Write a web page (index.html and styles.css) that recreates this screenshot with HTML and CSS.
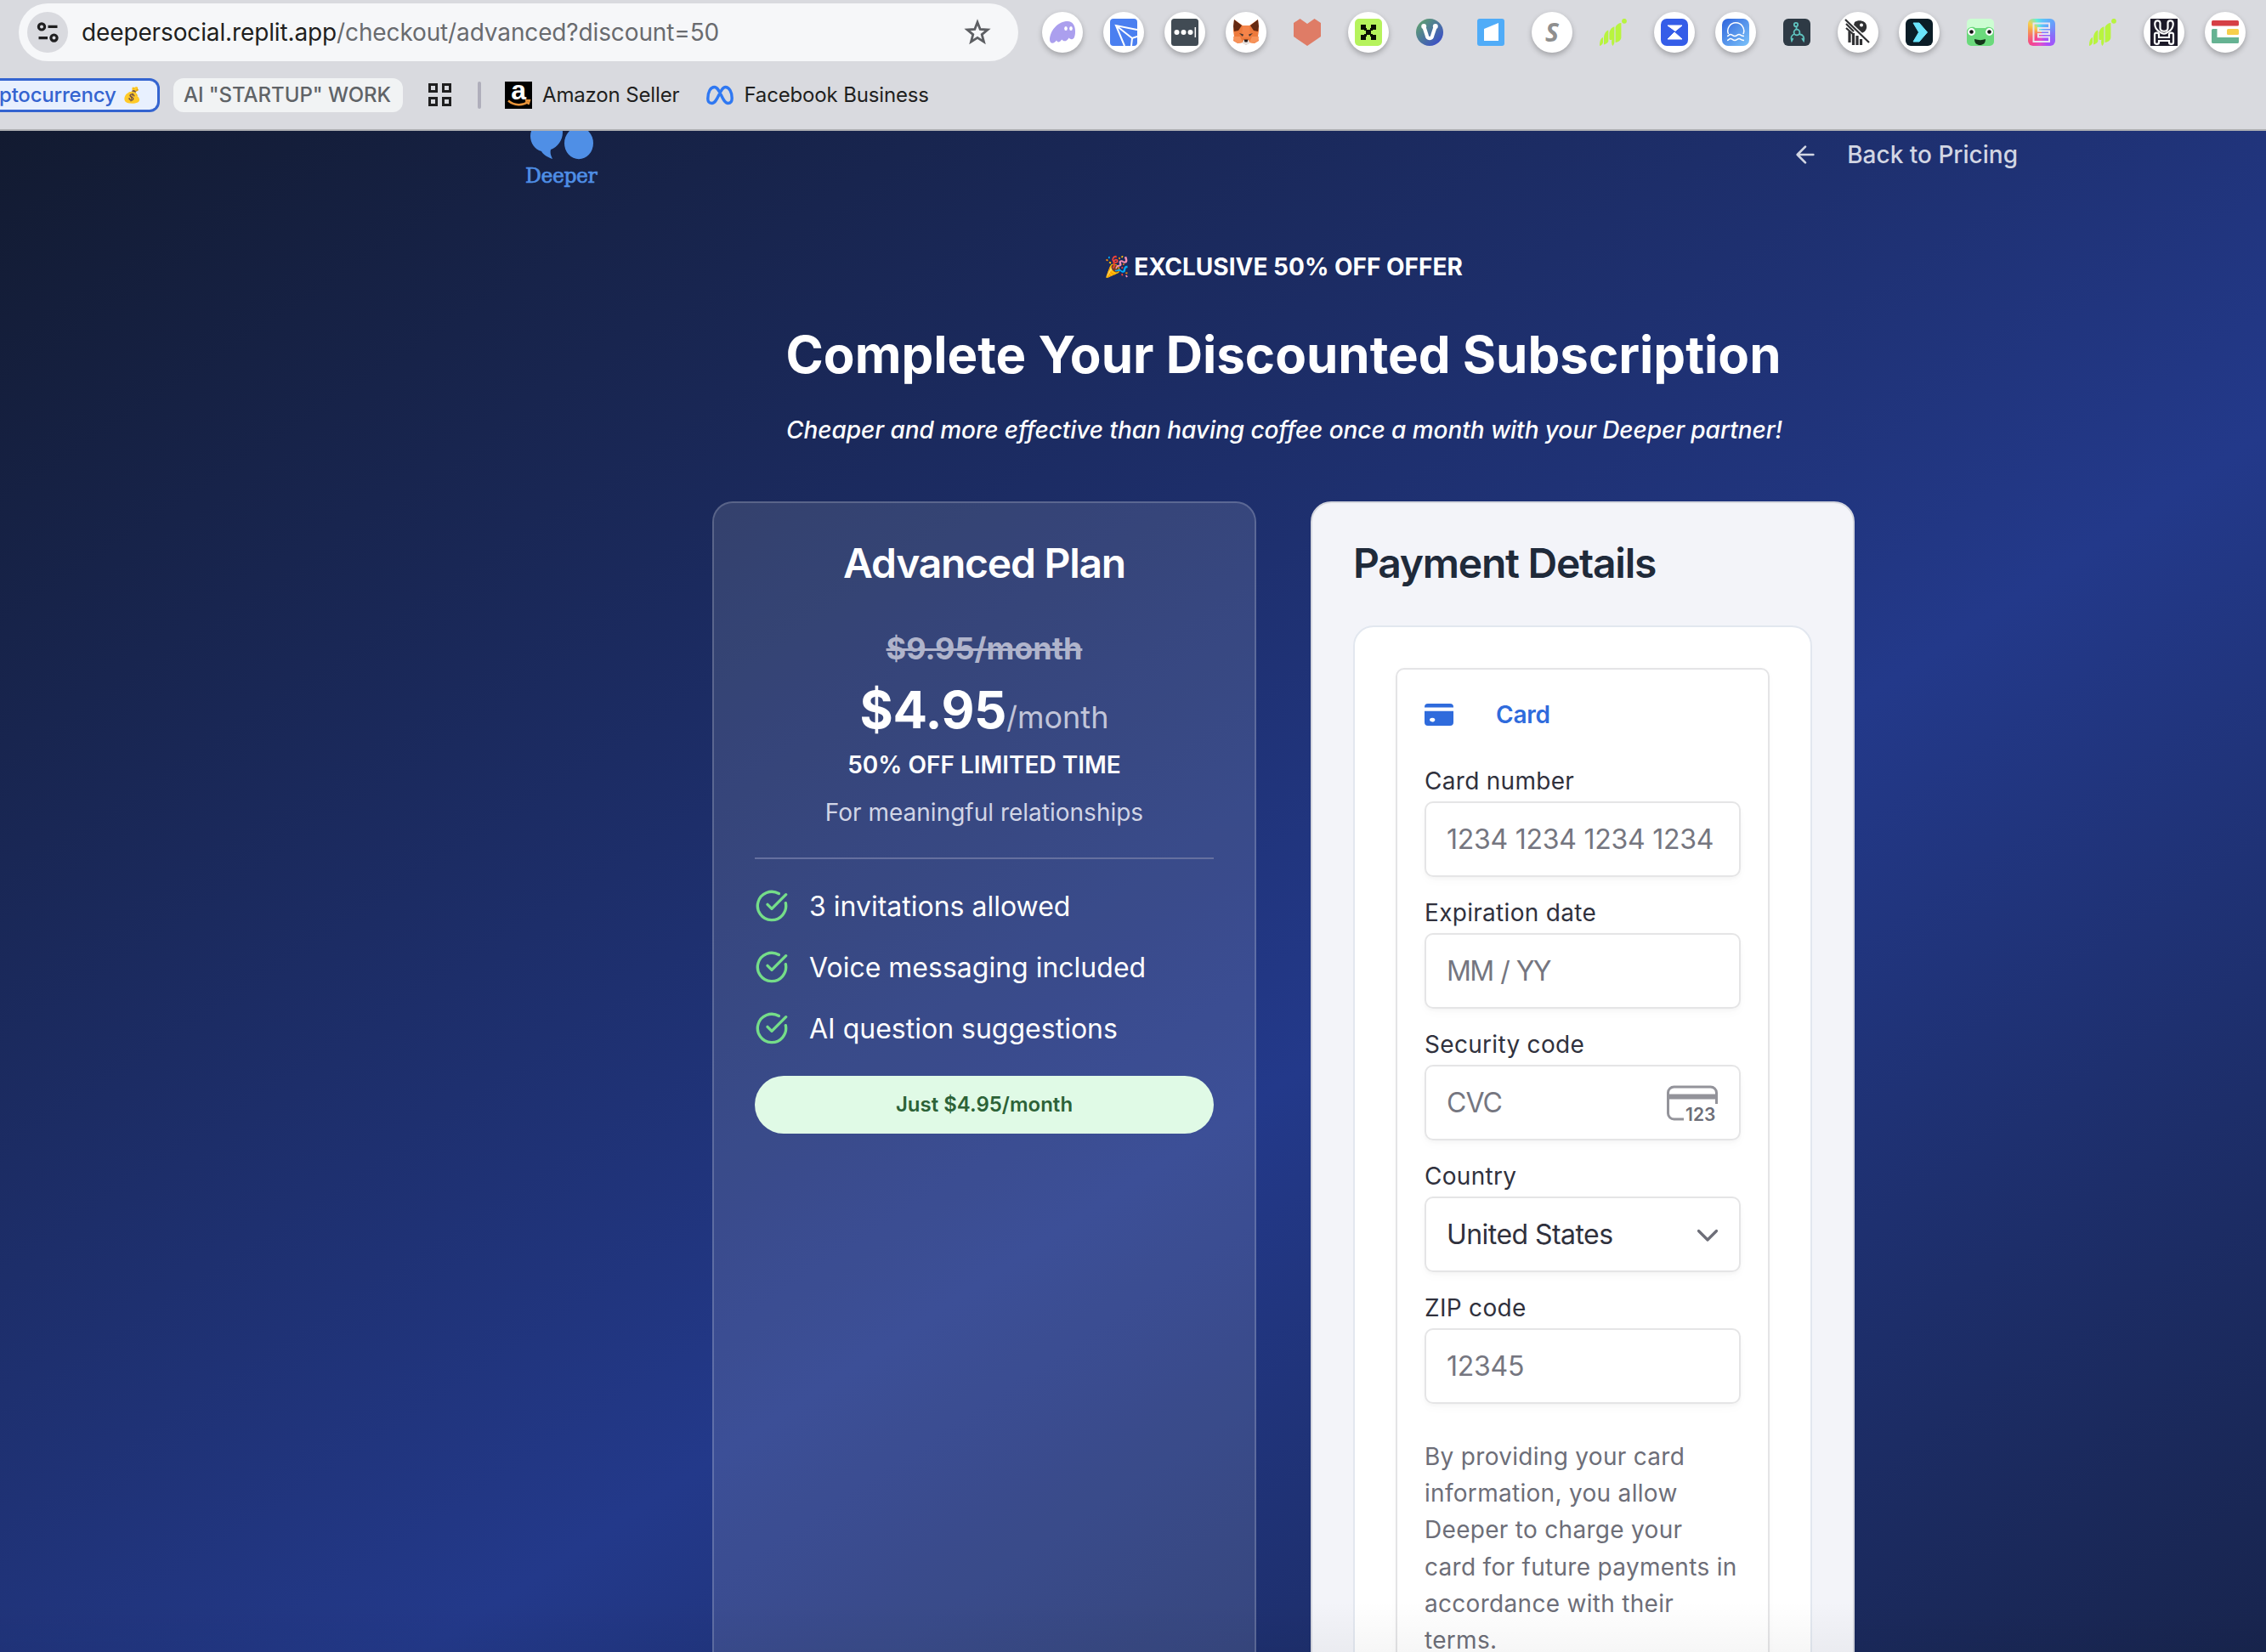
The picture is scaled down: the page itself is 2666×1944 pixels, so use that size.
FILE: index.html
```html
<!DOCTYPE html>
<html lang="en">
<head>
<meta charset="utf-8">
<title>Deeper – Checkout</title>
<link rel="stylesheet" href="styles.css">
</head>
<body>
<header class="browser">
  <div class="toolbar">
    <div class="omnibox">
      <span class="site-info">
        <svg width="32" height="32" viewBox="0 0 32 32" fill="none" stroke="#1f1f20" stroke-width="3.2"><circle cx="9" cy="9.4" r="3.6"/><path d="M16.500 9.400H27.500M5.500 22.600H16"/><circle cx="23.500" cy="22.600" r="3.600"/></svg>
      </span>
      <span class="url"><b>deepersocial.replit.app</b>/checkout/advanced?discount=50</span>
      <svg class="star" width="32" height="32" viewBox="0 0 32 32" fill="none" stroke="#5d5f63" stroke-width="2.800"><path d="M16 4.200l3.200 8.200 8.800.6-6.800 5.600 2.300 8.600L16 22.400l-7.500 4.800 2.300-8.600L4 13l8.800-.6z"/></svg>
    </div>
    <div class="extensions">
      <span class="ext ext-round"><svg viewBox="0 0 32 32"><path d="M1 24C2 13 11 3 22 3c6 0 9 5 9 12 0 7-2 10-5 9-1.200-.3-1.800-1-2.400-1.600-1.800 3.500-5.600 5.600-8.400 2.200C12.600 28.500 10 28 9 25.500 6.500 29.500.8 30.500 1 24z" fill="#ab9fee"/><ellipse cx="20" cy="11.500" rx="1.800" ry="2.600" fill="#fff"/><ellipse cx="26" cy="11.500" rx="1.800" ry="2.600" fill="#fff"/></svg></span>
      <span class="ext ext-round"><svg viewBox="0 0 32 32"><rect width="32" height="32" rx="4" fill="#4a7ff0"/><path d="M32 13L7 8l10 24M7 8l19 15 6-2M26 23l-1 9" fill="none" stroke="#fff" stroke-width="2"/></svg></span>
      <span class="ext ext-round"><svg viewBox="0 0 32 32"><rect width="32" height="32" rx="3.500" fill="#414b54"/><circle cx="6.500" cy="16" r="3" fill="#fff"/><circle cx="14.500" cy="16" r="3" fill="#fff"/><circle cx="22.500" cy="16" r="3" fill="#fff"/><path d="M28.300 10v12" stroke="#fff" stroke-width="1.500"/></svg></span>
      <span class="ext ext-round"><svg viewBox="0 0 32 32"><path d="M2 1l10 7h8l10-7 1 13-1 7 1 5-5 3-6-1-4 3-4-3-6 1-5-3 1-5-1-7z" fill="#ee7a3c"/><path d="M2 1l9 7-4 6-5 1-1-6zM30 1l-9 7 4 6 5 1 1-6z" fill="#662a12"/><path d="M1 21h8l3 7-5 1-5-3zM31 21h-8l-3 7 5 1 5-3z" fill="#f7935a"/><path d="M12 8h8l1 14h-10z" fill="#f5844a"/><path d="M8 17l5 1.500-1 2.500zM24 17l-5 1.500 1 2.500z" fill="#40352f"/><path d="M13 25h6l1.500 4-4.500 2-4.500-2z" fill="#e6e2e0"/><path d="M13.500 24.500h5l-1 3h-3z" fill="#2a1a16"/></svg></span>
      <span class="ext"><svg viewBox="0 0 32 32"><path d="M0 5l7.500-5L16 6l8.500-6L32 5v16L16 32 0 21z" fill="#df7c66"/></svg></span>
      <span class="ext ext-round"><svg viewBox="0 0 32 32"><rect width="32" height="32" rx="5" fill="#b6f35c"/><path d="M7 7h6v6H7zM19 7h6v6h-6zM13 13h6v6h-6zM7 19h6v6H7zM19 19h6v6h-6zM11 11h3v3h-3zM18 11h3v3h-3zM11 18h3v3h-3zM18 18h3v3h-3z" fill="#0b0f05"/></svg></span>
      <span class="ext"><svg viewBox="0 0 32 32"><defs><linearGradient id="vg" x1="0" y1="0" x2="1" y2="1"><stop offset=".15" stop-color="#5c9a76"/><stop offset=".85" stop-color="#3d52c4"/></linearGradient></defs><circle cx="16" cy="16" r="16" fill="url(#vg)"/><path d="M9.500 10l3 9c.8 5.500 6.200 5.500 7 0l3-9" fill="none" stroke="#fff" stroke-width="4.200" stroke-linecap="round"/><circle cx="9.200" cy="9" r="3" fill="#fff"/><circle cx="22.800" cy="9" r="3" fill="#fff"/></svg></span>
      <span class="ext"><svg viewBox="0 0 32 32"><rect width="32" height="32" rx="3" fill="#50acf8"/><path d="M8 12l17-7v21H8z" fill="#fff"/></svg></span>
      <span class="ext ext-round"><span class="ext-letter">S</span></span>
      <span class="ext"><svg viewBox="0 0 32 32" fill="#b8f43e"><circle cx="29" cy="2.800" r="2.900"/><path d="M18.600 10c1-3 4-5 6.800-5v17c0 3-3 5.500-6.800 6zM11.400 18c0-4 2.500-8 6-8.500V27c0 2-.8 3.800-2 5-1.200-1.500-1.600-4-1-7.500-1.500 1-3 .5-3-1zM5 23c0-4.500 2-8.500 5.300-9.500V26.500c-.6 2-3 3.500-5.300 4zM0 32c0-5 1-9 4-10v6c-.5 2-2 3.500-4 4z"/></svg></span>
      <span class="ext ext-round"><svg viewBox="0 0 32 32"><rect width="32" height="32" rx="7" fill="#355de8"/><path d="M8 8h17l-8 6.500zM8 24h17l-9-8z" fill="#fff" stroke="#fff" stroke-width="1" stroke-linejoin="round"/></svg></span>
      <span class="ext ext-round"><svg viewBox="0 0 32 32"><defs><linearGradient id="wg" x1="0" y1="0" x2="1" y2="1"><stop stop-color="#2f63dc"/><stop offset="1" stop-color="#7cc4fa"/></linearGradient></defs><rect width="32" height="32" rx="7" fill="url(#wg)"/><path d="M7.500 18a9.500 9.500 0 1 1 17.500 0M6 20.500c2 0 2-2 4-2s2.500 2 5 2 3-2 5-2 2.500 2 6 2M6 25.500c2 0 2-2 4-2s2.500 2 5 2 3-2 5-2 2.500 2 6 2" fill="none" stroke="#fff" stroke-width="1.500"/></svg></span>
      <span class="ext"><svg viewBox="0 0 32 32"><rect width="32" height="32" rx="6" fill="#2e3a45"/><g fill="none" stroke="#5fc3bf" stroke-width="1.800"><circle cx="15" cy="7" r="2.200"/><circle cx="16" cy="16" r="3.400"/><path d="M15.500 9.500v3M13 18c-4 2-4.500 4-3 8l1.500-3M19 18c5 1 6 4 5 8l-2-3"/></g></svg></span>
      <span class="ext ext-round"><svg viewBox="0 0 32 32"><path d="M12 4c5-3.500 13-1.500 14 4 .8 4.500-2 8-6 9-5 0-9-4-9.500-8z" fill="#303133"/><circle cx="20" cy="7.500" r="2" fill="#fff"/><path d="M6 15v13M10.500 17v14M15 20v11M19.500 24v7" stroke="#303133" stroke-width="3.200"/><path d="M1 1l28 27" stroke="#fff" stroke-width="5"/><path d="M1 1l28 27M2 6l9 9M2 11l8 7" stroke="#303133" stroke-width="2.200" fill="none"/></svg></span>
      <span class="ext ext-round"><svg viewBox="0 0 32 32"><rect width="32" height="32" rx="6" fill="#0b1d27"/><path d="M9 5h7l9.500 11L16 27H9l6.500-11z" fill="#6be4fb" stroke="#6be4fb" stroke-linejoin="round"/></svg></span>
      <span class="ext"><svg viewBox="0 0 32 32"><rect width="32" height="32" rx="5" fill="#ccfdd2"/><path d="M0 14c2-5 8-5 10-3h12c2-2 8-2 10 3v13a5 5 0 0 1-5 5H5a5 5 0 0 1-5-5z" fill="#6bd97c"/><circle cx="5.500" cy="15.500" r="4.400" fill="#fff"/><circle cx="26.500" cy="15.500" r="4.400" fill="#fff"/><circle cx="5.500" cy="15.500" r="2.300" fill="#111"/><circle cx="26.500" cy="15.500" r="2.300" fill="#111"/><path d="M9 24c5 1.500 9 1.500 13 0 0 5-3 7-6.500 7S9 29 9 24z" fill="#14351a"/></svg></span>
      <span class="ext"><span class="rainbow"><svg viewBox="0 0 32 32" fill="none" stroke="#e9e4f1" stroke-width="2"><path d="M6.500 5.500h18.500v5.500H12v3.500h13v3.500H12v3.500h13V27H6.500z"/></svg></span></span>
      <span class="ext"><svg viewBox="0 0 32 32" fill="#b8f43e"><circle cx="29" cy="2.800" r="2.900"/><path d="M18.600 10c1-3 4-5 6.800-5v17c0 3-3 5.500-6.800 6zM11.400 18c0-4 2.500-8 6-8.500V27c0 2-.8 3.800-2 5-1.200-1.500-1.600-4-1-7.500-1.500 1-3 .5-3-1zM5 23c0-4.500 2-8.500 5.300-9.500V26.500c-.6 2-3 3.500-5.300 4zM0 32c0-5 1-9 4-10v6c-.5 2-2 3.500-4 4z"/></svg></span>
      <span class="ext ext-round"><svg viewBox="0 0 32 32"><rect width="32" height="32" fill="#1c1a29"/><g fill="none" stroke="#fff" stroke-width="2.200"><path d="M13.500 17C7 14 4.500 9 5.500 4.500c.6-2.800 6-2.800 6 .5v6c0 5 9 5 9 0V5c0-3.300 5.400-3.300 6-.5 1 4.500-1.500 9.500-8 12.500-1.500.8-3.500.8-5 0z"/><path d="M5 18.500c0-2.500 5-2.500 5 0v3.500h12v-3.500c0-2.500 5-2.500 5 0v9.500c0 2.500-5 2.500-5 0V26H10v2c0 2.500-5 2.500-5 0z"/></g></svg></span>
      <span class="ext ext-round"><svg viewBox="0 0 32 32"><rect y="2" width="32" height="6.500" rx="1.500" fill="#d63f45"/><path d="M0 13.500a1.500 1.500 0 0 1 1.500-1.500h5v10H32v5.500a1.500 1.500 0 0 1-1.500 1.500h-29A1.500 1.500 0 0 1 0 27.500z" fill="#66b393"/><rect x="18" y="12" width="14" height="7" rx="1.500" fill="#f8cf4c"/></svg></span>
    </div>
  </div>
  <div class="bookmarks">
    <span class="group group-active"><span>ptocurrency</span><i class="emoji-bag">💰</i></span>
    <span class="group group-muted">AI "STARTUP" WORK</span>
    <svg class="grid-icon" width="30" height="30" viewBox="0 0 30 30" fill="none" stroke="#1f1f20" stroke-width="3"><path d="M2.500 2.500h8v8h-8zM18.500 2.500h8v8h-8zM2.500 18.500h8v8h-8zM18.500 18.500h8v8h-8z"/></svg>
    <span class="divider"></span>
    <span class="bookmark"><span class="amazon">a<svg viewBox="0 0 32 9" width="32" height="9" fill="none" stroke="#e8943a" stroke-width="2.400"><path d="M4 1.500c7 6 17 6 23 1.500M24 1.500l5-.5-1.500 5"/></svg></span><span>Amazon Seller</span></span>
    <span class="bookmark bookmark-meta"><svg width="32" height="32" viewBox="0 0 32 32" fill="none" stroke="#2f78f2" stroke-width="3.400"><path d="M1.800 20C1.800 12 5 6.500 9.500 6.500c7 0 9 19 16 19 3.500 0 4.700-2.500 4.700-6 0-7-3.200-13-7.700-13-6.500 0-9 19-16 19-3.500 0-4.700-2-4.700-5.500z"/></svg><span>Facebook Business</span></span>
  </div>
</header>
<div class="page">
  <div class="frame">
    <nav class="nav">
      <div class="logo">
        <svg width="86" height="38" viewBox="0 0 86 38" fill="#4f8fe6"><path d="M6 6C6-4 15-14 26-14S44-6 44 2c0 9-6 17-14 20-1 4 0 7 2 11C26 31 21 28 19 24 11 22 6 14 6 6z"/><ellipse cx="63" cy="14.500" rx="17" ry="18.800"/></svg>
        <span>Deeper</span>
      </div>
      <a class="back"><svg width="32" height="32" viewBox="0 0 24 24" fill="none" stroke="currentColor" stroke-width="2" stroke-linecap="round" stroke-linejoin="round"><path d="M12 19l-7-7 7-7M19 12H5"/></svg><span>Back to Pricing</span></a>
    </nav>
    <section class="hero">
      <p class="offer"><i>🎉</i>EXCLUSIVE 50% OFF OFFER</p>
      <h1>Complete Your Discounted Subscription</h1>
      <p class="tagline">Cheaper and more effective than having coffee once a month with your Deeper partner!</p>
    </section>
    <main class="cards">
      <section class="card plan">
        <h2>Advanced Plan</h2>
        <p class="old-price">$9.95/month</p>
        <p class="price"><b>$4.95</b><span>/month</span></p>
        <p class="limited">50% OFF LIMITED TIME</p>
        <p class="blurb">For meaningful relationships</p>
        <ul class="features">
          <li><svg class="check" viewBox="0 0 24 24"><path d="M21.801 10A10 10 0 1 1 17 3.335M9 11l3 3L22 4"/></svg>3 invitations allowed</li>
          <li><svg class="check" viewBox="0 0 24 24"><path d="M21.801 10A10 10 0 1 1 17 3.335M9 11l3 3L22 4"/></svg>Voice messaging included</li>
          <li><svg class="check" viewBox="0 0 24 24"><path d="M21.801 10A10 10 0 1 1 17 3.335M9 11l3 3L22 4"/></svg>AI question suggestions</li>
        </ul>
        <div class="pill">Just $4.95/month</div>
      </section>
      <section class="card payment">
        <h2>Payment Details</h2>
        <div class="panel">
          <form class="stripe">
            <div class="method"><svg width="34" height="26" viewBox="0 0 34 26" fill="#2f6bdc"><path d="M0 4a4 4 0 0 1 4-4h26a4 4 0 0 1 4 4v.400H0zM0 8.700h34V22a4 4 0 0 1-4 4H4a4 4 0 0 1-4-4zM12.400 19a3.200 2.400 0 1 0 0 .1z" fill-rule="evenodd"/></svg><span>Card</span></div>
            <div class="field"><label>Card number</label><div class="input"><span class="digits">1234 1234 1234 1234</span></div></div>
            <div class="field"><label>Expiration date</label><div class="input"><span class="expiry">MM / YY</span></div></div>
            <div class="field"><label>Security code</label><div class="input"><span class="cvc">CVC</span>
              <svg class="cvc-icon" width="62" height="50" viewBox="0 0 62 50" fill="none"><path d="M59.500 26V13a7 7 0 0 0-7-7h-43a7 7 0 0 0-7 7v24a7 7 0 0 0 7 7H21" stroke="#93939a" stroke-width="3"/><path d="M2 17.500h57" stroke="#93939a" stroke-width="6"/><text x="23" y="45.500" class="cvc-digits">123</text></svg>
            </div></div>
            <div class="field"><label>Country</label><div class="input"><span class="country">United States</span>
              <svg width="26" height="18" viewBox="0 0 26 18" fill="none" stroke="#6d6e78" stroke-width="3.200" stroke-linecap="round" stroke-linejoin="round"><path d="M2.500 4.500L13 15 23.500 4.500"/></svg>
            </div></div>
            <div class="field"><label>ZIP code</label><div class="input"><span class="digits">12345</span></div></div>
            <p class="terms">By providing your card<br>information, you allow<br>Deeper to charge your<br>card for future payments in<br>accordance with their<br>terms.</p>
          </form>
        </div>
      </section>
    </main>
  </div>
  <div class="bottom-shade"></div>
</div>
</body>
</html>
```
FILE: styles.css
```css
* { box-sizing: border-box; }
body {
  margin: 0;
  height: 1944px;
  overflow: hidden;
  display: flex;
  flex-direction: column;
  font-family: Inter, "Liberation Sans", sans-serif;
}
h1, h2, p, ul { margin: 0; padding: 0; }
ul { list-style: none; }
svg { display: block; flex: none; }

/* Browser chrome */
.browser {
  flex: none;
  height: 154px;
  background: #d9dadf;
  border-bottom: 2px solid #afb0b3;
  padding-top: 4px;
}
.toolbar { display: flex; gap: 28px; padding-left: 22px; height: 68px; align-items: center; }
.omnibox {
  flex: none;
  width: 1176px;
  height: 68px;
  border-radius: 34px;
  background: #f6f7f9;
  display: flex;
  align-items: center;
  padding: 0 32px 0 10px;
}
.site-info {
  width: 48px;
  height: 48px;
  border-radius: 50%;
  background: #d9dadf;
  display: grid;
  place-items: center;
}
.url { margin-left: 16px; flex: 1; font-size: 28px; letter-spacing: -.13px; color: #696b6f; white-space: nowrap; }
.url b { font-weight: 400; color: #1f1f20; }
.extensions { display: flex; gap: 24px; flex: none; }
.ext { width: 48px; height: 48px; border-radius: 50%; display: grid; place-items: center; }
.ext svg { width: 32px; height: 32px; }
.ext-round { background: #fff; box-shadow: 0 3px 6px rgba(0, 0, 0, .26); }
.ext-letter { font: italic 700 30px/32px "Open Sans", sans-serif; color: #8f8f8f; }
.rainbow {
  width: 32px;
  height: 32px;
  border-radius: 6px;
  background: conic-gradient(from 0deg, #5cc8f8, #63a5fb 12%, #8a6cf8 30%, #a94dfb 42%, #e24fc9 52%, #f5458b 62%, #f6a04c 78%, #f8cf4c 85%, #5ff0d8 94%, #5cc8f8);
}
.bookmarks { display: flex; align-items: center; height: 40px; margin-top: 20px; font-size: 24px; line-height: 28px; color: #1f1f20; white-space: nowrap; }
.group { flex: none; height: 40px; border-radius: 12px; font-weight: 500; display: flex; align-items: center; padding-bottom: 1px; }
.group-active {
  width: 200px;
  margin-left: -12px;
  padding-left: 11px;
  border: 3px solid #3464d0;
  border-left: 0;
  background: #e8f0fe;
  color: #3464d0;
  letter-spacing: -.2px;
}
.emoji-bag { margin-left: 7px; font-size: 18px; font-style: normal; }
.group-muted { margin-left: 16px; width: 270px; padding-left: 12px; background: #f1f3f4; color: #5f6367; letter-spacing: -.05px; }
.grid-icon { margin-left: 29px; }
.divider { margin-left: 29px; width: 4px; height: 32px; border-radius: 2px; background: #afaebb; }
.bookmark { display: flex; align-items: center; gap: 12px; margin-left: 28px; letter-spacing: -.15px; }
.bookmark span:last-child { padding-bottom: 1px; }
.bookmark-meta { margin-left: 32px; }
.amazon {
  width: 32px;
  height: 32px;
  background: #000;
  color: #fff;
  font: 700 32px/21px "Liberation Sans", sans-serif;
  text-align: center;
}

/* Checkout page */
.page {
  flex: 1;
  position: relative;
  overflow: hidden;
  background: linear-gradient(146.5deg, #121a2f -30px, #23398a 1767px, #121a2f 3570px);
}
.frame { width: 3020px; }
.nav { display: flex; justify-content: space-between; align-items: flex-start; height: 68px; padding: 0 646px 0 618px; }
.logo {
  display: flex;
  flex-direction: column;
  font: 23.500px/30px "DejaVu Serif", serif;
  letter-spacing: -.4px;
  color: #4f8fe6;
  -webkit-text-stroke: .7px #4f8fe6;
}
.back { display: flex; align-items: center; gap: 33px; height: 56px; font-size: 28px; font-weight: 500; color: #d2d6e3; }

.hero { padding-top: 72px; display: flex; flex-direction: column; align-items: center; color: #fff; }
.offer { display: flex; font-size: 28px; line-height: 40px; font-weight: 700; }
.offer i { font-size: 24px; font-style: normal; margin-right: 5px; }
h1 { margin-top: 47px; font-size: 60px; line-height: 72px; font-weight: 700; }
.tagline { margin-top: 33px; padding-left: 2px; font-size: 28px; line-height: 40px; font-weight: 500; font-style: italic; letter-spacing: -.06px; }

.cards { margin: 64px auto 0; width: 1344px; display: grid; grid-template-columns: 640px 640px; gap: 64px; height: 1500px; }
.card { border: 2px solid; border-radius: 24px; padding: 47px 48px 48px; }
h2 { font-size: 48px; line-height: 48px; font-weight: 600; letter-spacing: -1.25px; }

.plan {
  background: rgba(255, 255, 255, .113);
  background-clip: padding-box;
  border-color: rgba(255, 255, 255, .28);
  color: #fff;
  text-align: center;
}
.old-price { margin-top: 48px; font-size: 36px; line-height: 56px; font-weight: 700; color: #b0b4cb; text-decoration: line-through; text-decoration-thickness: 3px; }
.price { margin-top: 8px; height: 72px; font-size: 60px; line-height: 72px; }
.price b { letter-spacing: -.4px; }
.price span { font-size: 36px; line-height: 1; color: #c1c5d9; }
.limited { margin-top: 9px; font-size: 28px; line-height: 40px; font-weight: 600; }
.blurb { margin-top: 16px; font-size: 28px; line-height: 40px; color: #d1d5e6; }
.features { margin-top: 33px; padding-top: 31px; border-top: 2px solid #65709f; display: flex; flex-direction: column; gap: 24px; }
.features li { display: flex; align-items: center; height: 48px; gap: 24px; font-size: 32px; }
.check { width: 40px; height: 40px; fill: none; stroke: #75dd89; stroke-width: 2; stroke-linecap: round; stroke-linejoin: round; }
.pill { margin-top: 32px; height: 68px; line-height: 68px; border-radius: 34px; background: #e0fae6; color: #2c6237; font-size: 24px; font-weight: 600; }

.payment { background: #f3f4f9; border-color: #d5d7df; color: #1f2a3a; }
.panel { margin-top: 49px; height: 1400px; padding: 48px; border: 2px solid #e2e7ef; border-radius: 24px; background: #fff; }
.stripe { height: 1400px; padding: 32px; border: 2px solid #e4e4e6; border-radius: 10px; box-shadow: 0 2px 6px rgba(0, 0, 0, .03); }
.method { display: flex; align-items: center; gap: 50px; height: 42px; margin-bottom: 37px; color: #2f6bdc; font-size: 28px; font-weight: 600; letter-spacing: -.2px; }
.field { margin-bottom: 22px; }
label { display: block; height: 40px; line-height: 40px; font-size: 28px; letter-spacing: .3px; color: #30313d; }
.input {
  margin-top: 4px;
  height: 89px;
  padding: 0 24px;
  border: 2px solid #e5e5e6;
  border-radius: 10px;
  display: flex;
  align-items: center;
  justify-content: space-between;
  font-size: 32px;
  color: #757680;
  box-shadow: 0 2px 4px rgba(0, 0, 0, .03), 0 6px 12px rgba(0, 0, 0, .02);
}
.digits { letter-spacing: -.25px; }
.expiry { letter-spacing: -1.700px; word-spacing: 1.500px; }
.cvc { letter-spacing: -1px; }
.cvc-icon { overflow: visible; }
.country { letter-spacing: -.55px; color: #30313d; }
.cvc-digits { font: 600 21px Inter, sans-serif; fill: #6d6e78; }
.terms { margin-top: 41px; font-size: 28px; line-height: 43.200px; letter-spacing: .3px; color: #6d6e78; white-space: nowrap; }
.bottom-shade { position: absolute; left: 0; right: 0; bottom: 0; height: 60px; background: linear-gradient(rgba(0, 0, 0, 0), rgba(0, 0, 0, .035)); }
```
